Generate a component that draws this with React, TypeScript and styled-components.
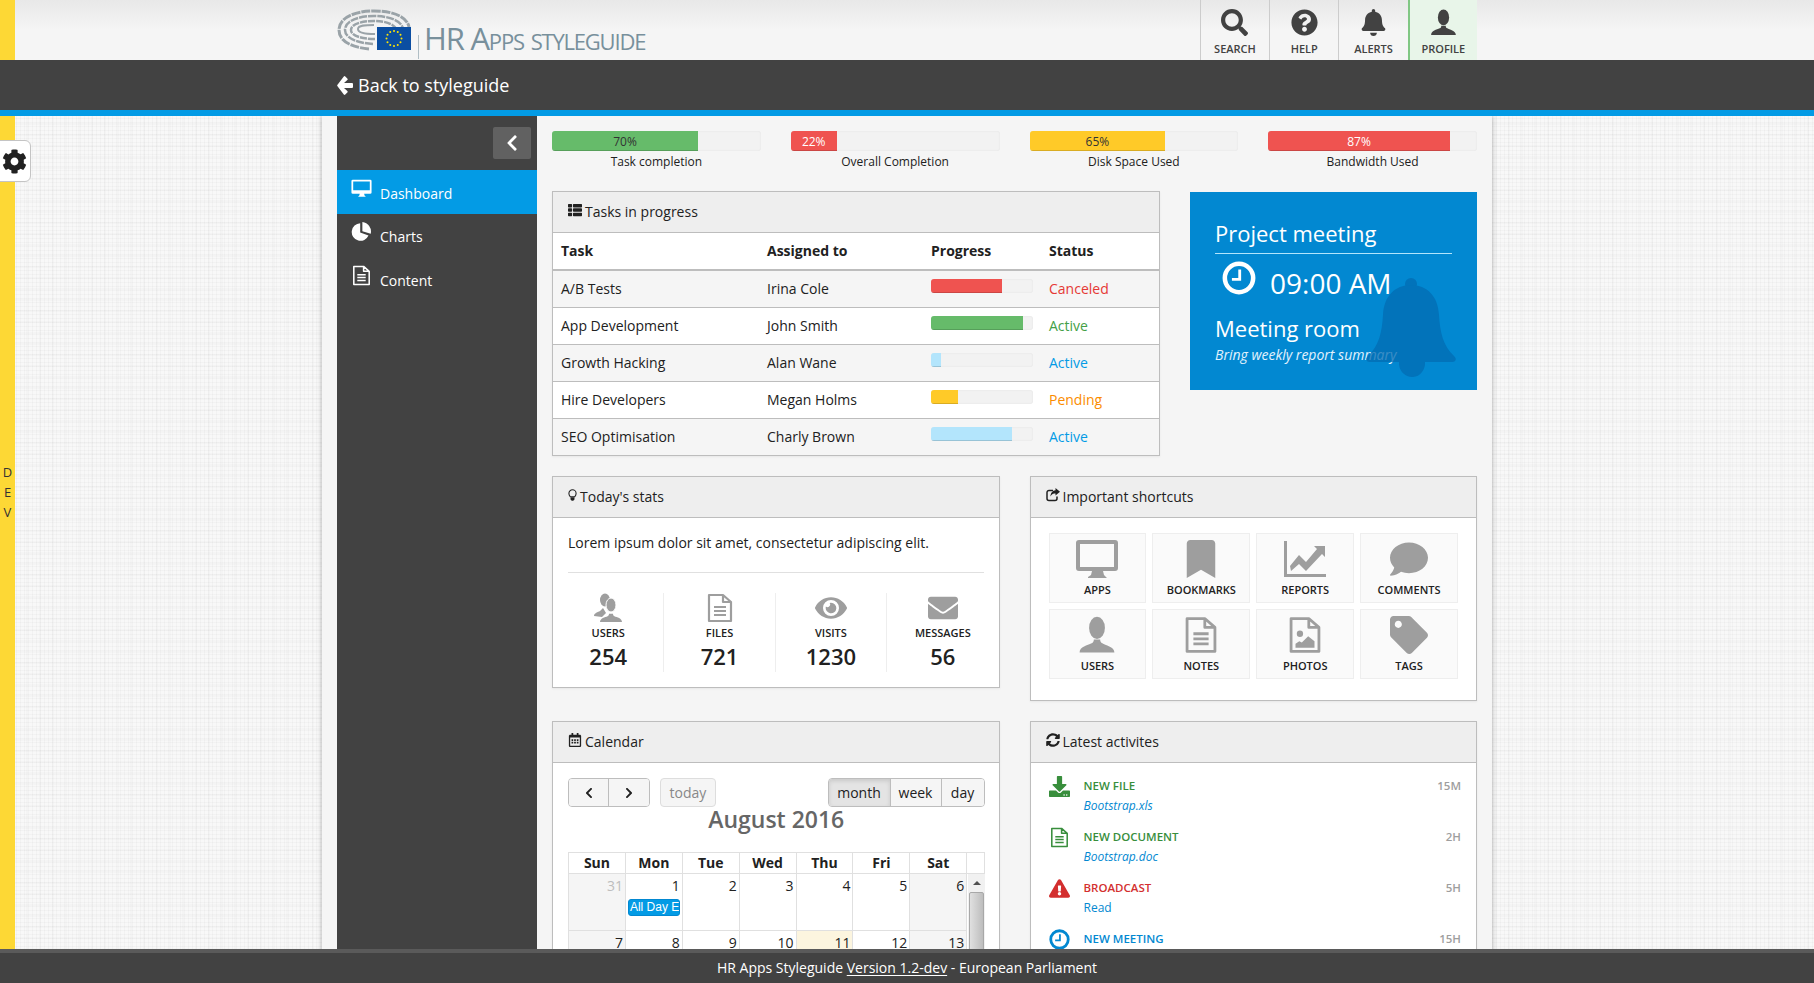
import * as React from 'react'
import styled, { createGlobalStyle } from 'styled-components'
import {
  FaBell, FaBookmark, FaChevronLeft, FaChevronRight, FaCog, FaComment, FaDownload, FaEnvelope,
  FaExclamationTriangle, FaEye, FaQuestionCircle, FaRegCalendarAlt, FaSearch, FaSyncAlt, FaTag, FaThList,
} from 'react-icons/fa'

const Global = createGlobalStyle`
  html, body { margin: 0; padding: 0; height: 100%; overflow: hidden; }
  body { font-family: "Open Sans", "Liberation Sans", sans-serif; font-size: 14px; color: #212121; }
  * { box-sizing: border-box; }
`

const Page = styled.div`
  position: relative;
  height: 983px;
  overflow: hidden;
  display: flex;
  flex-direction: column;
  background-color: #f8f8f8;
  background-image:
    repeating-linear-gradient(0deg, rgba(0, 0, 0, 0.022) 0 1px, transparent 1px 4px),
    repeating-linear-gradient(90deg, rgba(0, 0, 0, 0.022) 0 1px, transparent 1px 4px),
    repeating-linear-gradient(0deg, rgba(0, 0, 0, 0.014) 0 2px, transparent 2px 11px),
    repeating-linear-gradient(90deg, rgba(0, 0, 0, 0.014) 0 2px, transparent 2px 13px);
`

const DevStrip = styled.div`
  position: absolute;
  left: 0;
  top: 0;
  bottom: 0;
  width: 15px;
  background: #fdd835;
  z-index: 1;
  display: flex;
  flex-direction: column;
  align-items: center;
  padding-top: 462px;
  font-size: 13px;
  line-height: 20px;
  color: #333;
`

const SettingsTab = styled.div`
  position: absolute;
  left: -6px;
  top: 140px;
  width: 37px;
  height: 42px;
  background: #fff;
  border: 1px solid #c4c4c4;
  border-radius: 6px;
  z-index: 3;
  display: flex;
  align-items: center;
  justify-content: flex-end;
  padding-right: 3px;
  font-size: 25px;
  color: #212121;
`

const TopBar = styled.header`
  height: 60px;
  flex: none;
  margin-left: 15px;
  background: linear-gradient(#e8e8e8, #f5f5f5 50%);
  display: flex;
  justify-content: center;
  padding-right: 15px;
`

const TopInner = styled.div`
  width: 1140px;
  display: flex;
  align-items: stretch;
`

const Brand = styled.div`
  display: flex;
  align-items: flex-start;
  padding-top: 9px;
`

const BrandRule = styled.div`
  width: 1px;
  height: 24px;
  background: #b0bec5;
  margin: 26px 6px 0 7px;
`

const BrandName = styled.div`
  font-size: 31px;
  line-height: 38px;
  margin-top: 10px;
  margin-left: -1px;
  color: #78909c;
  font-variant: small-caps;
  letter-spacing: -1.2px;
  white-space: nowrap;
`

const TopNav = styled.nav`
  margin-left: auto;
  display: flex;
`

const TopItem = styled.a<{ $active?: boolean }>`
  width: 69.3px;
  display: flex;
  flex-direction: column;
  align-items: center;
  padding-top: 9px;
  border-left: ${p => (p.$active ? '2px solid #81c784' : '1px solid #ccc')};
  background: ${p => (p.$active ? '#e8f5e9' : 'transparent')};
  color: #424242;
  font-size: 11px;
  font-weight: 600;
  line-height: 15px;
  text-transform: uppercase;
  svg { width: 27px; height: 27px; margin-bottom: 5px; }
`

const BackBar = styled.div`
  position: relative;
  z-index: 2;
  height: 56px;
  flex: none;
  background: #424242;
  border-bottom: 6px solid #039be5;
  display: flex;
  justify-content: center;
`

const BackInner = styled.div`
  width: 1140px;
  display: flex;
  align-items: center;
  gap: 5px;
  color: #fff;
  font-size: 18px;
  svg { width: 16px; height: 19px; }
`

const Shell = styled.div`
  width: 1170px;
  margin: 0 auto;
  padding-left: 15px;
  flex: 1;
  min-height: 0;
  display: flex;
  background: #f5f5f5;
  box-shadow: 0 0 5px rgba(0, 0, 0, 0.3);
`

const Sidebar = styled.aside`
  width: 200px;
  flex: none;
  background: #424242;
  padding-top: 11px;
`

const Collapse = styled.div`
  width: 38px;
  height: 32px;
  margin: 0 6px 11px auto;
  background: #616161;
  border-radius: 2px;
  color: #fff;
  display: flex;
  align-items: center;
  justify-content: center;
  font-size: 18px;
`

const NavItem = styled.a<{ $active?: boolean }>`
  height: 43.5px;
  display: flex;
  align-items: center;
  gap: 8px;
  padding: 0 0 0 14px;
  color: #fff;
  font-size: 14px;
  background: ${p => (p.$active ? '#039be5' : 'transparent')};
  svg { width: 21px; height: 21px; margin-top: -6px; }
  span { margin-top: 3px; }
`

const Content = styled.main`
  flex: 1;
  min-width: 0;
  padding: 15px 15px 0;
`

const Meters = styled.div`
  display: grid;
  grid-template-columns: repeat(4, 1fr);
  gap: 30px;
  margin-bottom: 15px;
`

const Meter = styled.div`
  font-size: 12px;
  line-height: 22px;
  text-align: center;
  height: 45px;
`

const Track = styled.div<{ $h: number; $raised?: boolean }>`
  height: ${p => p.$h}px;
  background: #f2f2f2;
  border-radius: 3px;
  box-shadow: inset 0 0 2px rgba(0, 0, 0, 0.08);
  overflow: hidden;
  margin-top: ${p => (p.$raised ? '-5px' : '0')};
`

const Fill = styled.div<{ $color: string; $light?: boolean }>`
  height: 100%;
  background: ${p => p.$color};
  border-bottom: 1px solid rgba(0, 0, 0, 0.15);
  color: ${p => (p.$light ? '#fff' : '#333')};
  font-size: 12px;
  line-height: 21px;
`

const Row = styled.div<{ $cols: string }>`
  display: grid;
  grid-template-columns: ${p => p.$cols};
  column-gap: 30px;
  align-items: start;
  margin-bottom: 20px;
`

const Panel = styled.section`
  background: #fff;
  border: 1px solid #bdbdbd;
  box-shadow: 0 1px 2px rgba(0, 0, 0, 0.06);
`

const PanelHead = styled.h3`
  margin: 0;
  height: 41px;
  padding: 0 15px 2px;
  display: flex;
  align-items: center;
  gap: 3px;
  background: #eee;
  border-bottom: 1px solid #bdbdbd;
  font-size: 14px;
  font-weight: 400;
  color: #212121;
  svg { width: 14px; height: 14px; margin-top: -3px; }
`

const Table = styled.table`
  width: 100%;
  border-collapse: collapse;
  table-layout: fixed;
  font-size: 14px;
  th { height: 37px; padding: 0 8px 2px; text-align: left; font-weight: 700; border-bottom: 2px solid #bdbdbd; }
  td { height: 37px; padding: 0 8px; border-top: 1px solid #bdbdbd; }
  tbody tr:nth-child(odd) { background: #f5f5f5; }
  tbody tr:first-child td { border-top: 0; }
`

const TaskCol = styled.col`
  width: 206px;
`

const WhoCol = styled.col`
  width: 164px;
`

const ProgressCol = styled.col`
  width: 118px;
`

const StatusText = styled.span<{ $color: string }>`
  color: ${p => p.$color};
`

const Meeting = styled.div`
  position: relative;
  overflow: hidden;
  margin-top: 1px;
  height: 198px;
  background: #0288d1;
  color: #fff;
  padding: 25px 25px 0;
`

const MeetingBell = styled.div`
  position: absolute;
  left: 176px;
  top: 85px;
  color: #026cb3;
  opacity: 0.75;
  svg { display: block; width: 91px; height: 101px; }
`

const MeetingTitle = styled.div`
  font-size: 22px;
  line-height: 32px;
  padding-bottom: 4px;
  border-bottom: 1px solid #b3e5fc;
`

const MeetingTime = styled.div`
  display: flex;
  align-items: flex-start;
  gap: 14px;
  padding: 7px 0 0 7px;
  font-size: 28px;
  line-height: 44px;
  height: 56px;
  svg { width: 34px; height: 34px; }
`

const MeetingRoom = styled.div`
  font-size: 22px;
  line-height: 30px;
  margin-top: 3px;
`

const MeetingNote = styled.div`
  font-size: 14px;
  font-style: italic;
  line-height: 20px;
  margin-top: 2px;
  color: #e3f2fd;
`

const PanelBody = styled.div`
  padding: 15px;
`

const Lead = styled.p`
  margin: 0;
  line-height: 20px;
`

const Rule = styled.hr`
  border: 0;
  border-top: 1px solid #e0e0e0;
  margin: 19px 0 20px;
`

const Stats = styled.div`
  display: grid;
  grid-template-columns: repeat(4, 1fr);
  margin: 0 -15px 0;
`

const Stat = styled.div`
  height: 79px;
  display: flex;
  flex-direction: column;
  align-items: center;
  border-right: 1px solid #eee;
  &:last-child { border-right: 0; }
  svg { width: 32px; height: 30px; color: #9e9e9e; display: block; }
`

const StatLabel = styled.div`
  font-size: 11px;
  font-weight: 600;
  line-height: 16px;
  margin-top: 2px;
`

const StatValue = styled.div`
  font-size: 22px;
  font-weight: 600;
  line-height: 30px;
`

const Tiles = styled.div`
  display: grid;
  grid-template-columns: repeat(4, 1fr);
  gap: 6px;
  padding: 15px 18px 21px;
`

const Tile = styled.a`
  height: 70px;
  border: 1px solid #eee;
  background: #fafafa;
  display: flex;
  flex-direction: column;
  align-items: center;
  padding-top: 6px;
  font-size: 11px;
  font-weight: 600;
  line-height: 16px;
  svg { width: 44px; height: 38px; color: #9e9e9e; margin-bottom: 4px; display: block; }
`

const CalBody = styled.div`
  padding: 15px 14px 0 15px;
`

const CalBar = styled.div`
  display: flex;
  height: 29px;
`

const BtnGroup = styled.div`
  display: flex;
  border: 1px solid #bdbdbd;
  border-radius: 4px;
  overflow: hidden;
`

const CalBtn = styled.button<{ $active?: boolean; $w: number }>`
  width: ${p => p.$w}px;
  height: 100%;
  padding: 0;
  border: 0;
  border-right: 1px solid #bdbdbd;
  background: ${p => (p.$active ? '#e4e4e4' : '#f5f5f5')};
  box-shadow: ${p => (p.$active ? 'inset 0 2px 4px rgba(0,0,0,.12)' : 'none')};
  color: #212121;
  font: 14px "Open Sans", sans-serif;
  display: flex;
  align-items: center;
  justify-content: center;
  &:last-child { border-right: 0; }
  svg { width: 12px; height: 12px; }
`

const TodayBtn = styled.button`
  width: 56px;
  margin-left: 10px;
  padding: 0;
  border: 1px solid #ddd;
  border-radius: 4px;
  background: #f5f5f5;
  color: #888;
  font: 14px "Open Sans", sans-serif;
`

const ViewGroup = styled(BtnGroup)`
  margin-left: auto;
`

const CalTitle = styled.div`
  height: 45px;
  text-align: center;
  font-size: 23px;
  font-weight: 600;
  line-height: 25px;
  color: #666;
`

const CalHead = styled.div`
  display: grid;
  grid-template-columns: repeat(7, 56.9px) 1fr;
  height: 22px;
  border: 1px solid #e0e0e0;
  width: 417px;
  font-weight: 700;
  line-height: 20px;
  text-align: center;
  div { border-right: 1px solid #e0e0e0; }
  div:last-child { border-right: 0; }
`

const CalGrid = styled.div`
  position: relative;
  width: 417px;
  height: 120px;
  border-left: 1px solid #e0e0e0;
`

const Week = styled.div`
  display: grid;
  grid-template-columns: repeat(7, 56.9px);
  height: 57px;
`

const Day = styled.div<{ $weekend?: boolean; $today?: boolean; $muted?: boolean }>`
  min-width: 0;
  background: ${p => (p.$today ? '#fcf5df' : p.$weekend ? '#f5f5f5' : '#fff')};
  border-right: 1px solid #e0e0e0;
  border-bottom: 1px solid #e0e0e0;
  padding: 2px 2px 0 0;
  text-align: right;
  line-height: 20px;
  color: ${p => (p.$muted ? '#bdbdbd' : '#212121')};
`

const Event = styled.div`
  margin: 3px 0 0 2px;
  height: 17px;
  background: #039be5;
  border: 1px solid #0288d1;
  border-radius: 3px;
  color: #fff;
  font: 12px/15px "Liberation Sans", sans-serif;
  text-align: left;
  padding-left: 1px;
  overflow: hidden;
  white-space: nowrap;
`

const Scrollbar = styled.div`
  position: absolute;
  top: 0;
  right: 0;
  bottom: 0;
  width: 17px;
  background: #f1f1f1;
  padding-top: 18px;
  &::before {
    content: '';
    position: absolute;
    top: 7px;
    left: 5px;
    border: 4px solid transparent;
    border-top: 0;
    border-bottom: 4px solid #505050;
  }
`

const ScrollThumb = styled.div`
  margin-left: 1px;
  width: 15px;
  height: 200px;
  background: linear-gradient(90deg, #e0e0e0, #bdbdbd);
  border: 1px solid #a8a8a8;
  border-radius: 2px;
`

const Activities = styled.div`
  padding: 13px 15px 0 18px;
`

const Activity = styled.div`
  display: grid;
  grid-template-columns: 35px 1fr auto;
  height: 51px;
  font-size: 12px;
  line-height: 19px;
`

const ActivityIcon = styled.div<{ $color: string }>`
  color: ${p => p.$color};
  svg { display: block; width: 21px; height: 21px; }
`

const ActivityTitle = styled.div<{ $color: string }>`
  color: ${p => p.$color};
  font-weight: 600;
  font-size: 11.5px;
  margin-bottom: 1px;
`

const ActivityLink = styled.a<{ $plain?: boolean }>`
  color: #0288d1;
  font-style: ${p => (p.$plain ? 'normal' : 'italic')};
  font-size: 12px;
`

const ActivityTime = styled.div`
  color: #9e9e9e;
  font-weight: 600;
  font-size: 11.5px;
`

const Footer = styled.footer`
  position: absolute;
  left: 0;
  right: 0;
  bottom: 0;
  z-index: 4;
  height: 34px;
  background: #424242;
  border-top: 4px solid #5a5a5a;
  color: #fff;
  font-size: 14px;
  line-height: 30px;
  text-align: center;
  u { text-underline-offset: 2px; }
`

const Stroke = { fill: 'none', stroke: 'currentColor', strokeLinejoin: 'round' as const }

const ArrowLeft = () => (
  <svg viewBox="0 0 16 19" fill="currentColor">
    <path d="M8.300 0.500 10.300 2.500a1 1 0 0 1 0 1.500L7 7H15a1 1 0 0 1 1 1v3a1 1 0 0 1-1 1H7l3.300 3a1 1 0 0 1 0 1.500l-2 2a1 1 0 0 1-1.500 0L.5 10.200a1 1 0 0 1 0-1.400L6.800.5a1 1 0 0 1 1.500 0z" />
  </svg>
)

const UserIcon = () => (
  <svg viewBox="0 0 24 24" fill="currentColor">
    <ellipse cx="12" cy="7.500" rx="5" ry="7" />
    <path d="M1 23c0-3.600 5-4.600 7.600-5.800 1-.5 1.400-1.200 1.400-2.400h4c0 1.200.4 1.900 1.400 2.400C17 18.400 23 19.400 23 23z" />
  </svg>
)

const UsersIcon = () => (
  <svg viewBox="0 0 30 30" fill="currentColor">
    <ellipse cx="12" cy="7" rx="5" ry="6.500" />
    <path d="M1 23c0-3 4-3.800 6-5l3-3 3 5-4 4z" />
    <ellipse cx="18" cy="12" rx="5" ry="7" stroke="#fff" strokeWidth="1" />
    <path d="M7 29c0-4 5-4.600 7.600-5.800 1-.5 1.400-1.200 1.400-2.400h4c0 1.200.4 1.900 1.400 2.400 2.600 1.200 7.600 1.800 7.600 5.800z" />
  </svg>
)

const DesktopIcon = () => (
  <svg viewBox="0 0 42 38" fill="currentColor">
    <path fillRule="evenodd" d="M3 0h36a3 3 0 0 1 3 3v25a3 3 0 0 1-3 3H27l1 4 3 3H12v-1l3-2 1-4H3a3 3 0 0 1-3-3V3a3 3 0 0 1 3-3zm1 4v23h34V4z" />
  </svg>
)

const DesktopSolidIcon = () => (
  <svg viewBox="0 0 24 22" fill="currentColor">
    <path fillRule="evenodd" d="M2 1h20a1.500 1.500 0 0 1 1.500 1.500v13a1.500 1.500 0 0 1-1.500 1.500h-7l.5 2 1.500 1.500H8L9.500 19l.5-2H2a1.500 1.500 0 0 1-1.500-1.500v-13A1.500 1.500 0 0 1 2 1zm.5 2v10h19V3z" />
  </svg>
)

const PieIcon = () => (
  <svg viewBox="0 0 24 24" fill="currentColor">
    <path d="M10.500 1.500a10 10 0 1 0 9.500 14L10.500 12z" />
    <path d="M13 0v10.500l9.500 3A11 11 0 0 0 13 0z" />
  </svg>
)

const FileIcon = () => (
  <svg viewBox="0 0 26 30" {...Stroke} strokeWidth="2.200">
    <path d="M2 2h14l8 7v19H2zM16 2v7h8" />
    <path d="M7 14h12M7 18h12M7 22h12" />
  </svg>
)

const PhotoIcon = () => (
  <svg viewBox="0 0 26 30">
    <path {...Stroke} strokeWidth="2.200" d="M2 2h14l8 7v19H2zM16 2v7h8" />
    <circle cx="9" cy="14" r="2.500" fill="currentColor" />
    <path fill="currentColor" d="M5.500 25v-3l3-2 2 1 5-5 5 4v5z" />
  </svg>
)

const ChartIcon = () => (
  <svg viewBox="0 0 42 38" fill="currentColor">
    <path d="M0 1h3v33h39v3H0z" />
    <path d="M6 26l9-11 7 7L33 9l-3-3h11v11l-3-3-16 17-7-7-8 7z" />
  </svg>
)

const ClockIcon = () => (
  <svg viewBox="0 0 24 24" {...Stroke} strokeWidth="3.200">
    <circle cx="12" cy="12" r="10" />
    <path strokeWidth="2" strokeLinejoin="miter" d="M12.500 6v7H7" />
  </svg>
)

const NarrowSvg = styled.svg`
  && { width: 9px; }
`

const BulbIcon = () => (
  <NarrowSvg viewBox="2 0 10 14">
    <path {...Stroke} strokeWidth="1.200" d="M4.500 9C3.500 7.500 3 6.700 3 5.200a4 4 0 0 1 8 0C11 6.700 10.500 7.500 9.500 9z" />
    <path fill="currentColor" d="M4.800 9.500h4.400V12L7.800 13.500H6.200L4.800 12z" />
  </NarrowSvg>
)

const ShareIcon = () => (
  <svg viewBox="0 0 14 14">
    <path {...Stroke} strokeWidth="1.500" d="M7 2.500H3a2 2 0 0 0-2 2v6a2 2 0 0 0 2 2h6a2 2 0 0 0 2-2v-2" />
    <path fill="currentColor" d="M9.500 0L14 3.800 9.500 7.500V5.500C7.500 5.500 5.500 6 4.500 8.500 4.500 5 6.500 2.500 9.500 2.200z" />
  </svg>
)

const BellShape = () => (
  <svg viewBox="0 0 91 101" fill="currentColor">
    <circle cx="45" cy="7" r="6" />
    <path d="M45 8c16 0 27 11 28 30 1 17 4 31 15 41 3 3 2 6-2 6H4c-4 0-5-3-2-6 11-10 14-24 15-41C18 19 29 8 45 8z" />
    <path d="M33 85h26a13 14 0 0 1-26 2z" />
  </svg>
)

const Logo = () => (
  <svg width="74" height="42" viewBox="0 0 74 42">
    <g fill="none" stroke="#9aa3a8">
      <path strokeWidth="3" d="M32 40C12 38 2 31 2 21 2 9 17 2 37 2s33 6 35 16" strokeDasharray="9 1" />
      <path strokeWidth="2.500" d="M36 35C20 34 8 29 8 21 8 12 21 7 37 7s28 5 29 13" strokeDasharray="8 1" />
      <path strokeWidth="2.500" d="M38 30c-13 0-24-3-24-9 0-6 11-9 23-9s21 3 23 10" strokeDasharray="7 1" />
      <path strokeWidth="2" d="M38 25c-8 0-17-1-17-5s8-4 16-4" />
    </g>
    <rect x="40" y="18" width="34" height="23" fill="#0b4ea2" />
    {Array.from({ length: 12 }, (_, i) => {
      const a = (i * Math.PI) / 6
      return <circle key={i} cx={57 + Math.cos(a) * 7.500} cy={29.500 + Math.sin(a) * 7.500} r="1" fill="#ffe600" />
    })}
  </svg>
)

const meters = [
  { label: 'Task completion', pct: 70, color: '#66bb6a', text: '70%' },
  { label: 'Overall Completion', pct: 22, color: '#ef5350', text: '22%', light: true },
  { label: 'Disk Space Used', pct: 65, color: '#ffca28', text: '65%' },
  { label: 'Bandwidth Used', pct: 87, color: '#ef5350', text: '87%', light: true },
]

const tasks = [
  { task: 'A/B Tests', who: 'Irina Cole', pct: 70, bar: '#ef5350', status: 'Canceled', color: '#e53935' },
  { task: 'App Development', who: 'John Smith', pct: 90, bar: '#66bb6a', status: 'Active', color: '#43a047' },
  { task: 'Growth Hacking', who: 'Alan Wane', pct: 10, bar: '#b3e5fc', status: 'Active', color: '#039be5' },
  { task: 'Hire Developers', who: 'Megan Holms', pct: 26, bar: '#ffca28', status: 'Pending', color: '#fb8c00' },
  { task: 'SEO Optimisation', who: 'Charly Brown', pct: 79, bar: '#b3e5fc', status: 'Active', color: '#039be5' },
]

const stats = [
  { label: 'Users', value: 254, icon: <UsersIcon /> },
  { label: 'Files', value: 721, icon: <FileIcon /> },
  { label: 'Visits', value: 1230, icon: <FaEye /> },
  { label: 'Messages', value: 56, icon: <FaEnvelope /> },
]

const shortcuts = [
  { label: 'Apps', icon: <DesktopIcon /> },
  { label: 'Bookmarks', icon: <FaBookmark /> },
  { label: 'Reports', icon: <ChartIcon /> },
  { label: 'Comments', icon: <FaComment /> },
  { label: 'Users', icon: <UserIcon /> },
  { label: 'Notes', icon: <FileIcon /> },
  { label: 'Photos', icon: <PhotoIcon /> },
  { label: 'Tags', icon: <FaTag /> },
]

const activities = [
  { title: 'NEW FILE', sub: 'Bootstrap.xls', time: '15M', color: '#388e3c', icon: <FaDownload /> },
  { title: 'NEW DOCUMENT', sub: 'Bootstrap.doc', time: '2H', color: '#388e3c', icon: <FileIcon /> },
  { title: 'BROADCAST', sub: 'Read', plain: true, time: '5H', color: '#d32f2f', icon: <FaExclamationTriangle /> },
  { title: 'NEW MEETING', time: '15H', color: '#0288d1', icon: <ClockIcon /> },
]

const weeks = [
  [31, 1, 2, 3, 4, 5, 6],
  [7, 8, 9, 10, 11, 12, 13],
]

export default function App() {
  return (
    <Page>
      <Global />
      <DevStrip>
        <span>D</span>
        <span>E</span>
        <span>V</span>
      </DevStrip>
      <SettingsTab>
        <FaCog />
      </SettingsTab>

      <TopBar>
        <TopInner>
          <Brand>
            <Logo />
            <BrandRule />
            <BrandName>HR Apps styleguide</BrandName>
          </Brand>
          <TopNav>
            <TopItem><FaSearch />Search</TopItem>
            <TopItem><FaQuestionCircle />Help</TopItem>
            <TopItem><FaBell />Alerts</TopItem>
            <TopItem $active><UserIcon />Profile</TopItem>
          </TopNav>
        </TopInner>
      </TopBar>

      <BackBar>
        <BackInner>
          <ArrowLeft />
          Back to styleguide
        </BackInner>
      </BackBar>

      <Shell>
        <Sidebar>
          <Collapse><FaChevronLeft /></Collapse>
          <NavItem $active><DesktopSolidIcon /><span>Dashboard</span></NavItem>
          <NavItem><PieIcon /><span>Charts</span></NavItem>
          <NavItem><FileIcon /><span>Content</span></NavItem>
        </Sidebar>

        <Content>
          <Meters>
            {meters.map(m => (
              <Meter key={m.label}>
                <Track $h={20}>
                  <Fill $color={m.color} $light={m.light} style={{ width: `${m.pct}%` }}>{m.text}</Fill>
                </Track>
                {m.label}
              </Meter>
            ))}
          </Meters>

          <Row $cols="608px minmax(0, 1fr)">
            <Panel>
              <PanelHead><FaThList /> Tasks in progress</PanelHead>
              <Table>
                <colgroup>
                  <TaskCol />
                  <WhoCol />
                  <ProgressCol />
                  <col />
                </colgroup>
                <thead>
                  <tr>
                    <th>Task</th>
                    <th>Assigned to</th>
                    <th>Progress</th>
                    <th>Status</th>
                  </tr>
                </thead>
                <tbody>
                  {tasks.map(t => (
                    <tr key={t.task}>
                      <td>{t.task}</td>
                      <td>{t.who}</td>
                      <td>
                        <Track $h={14} $raised>
                          <Fill $color={t.bar} style={{ width: `${t.pct}%` }} />
                        </Track>
                      </td>
                      <td><StatusText $color={t.color}>{t.status}</StatusText></td>
                    </tr>
                  ))}
                </tbody>
              </Table>
            </Panel>

            <Meeting>
              <MeetingTitle>Project meeting</MeetingTitle>
              <MeetingTime><ClockIcon /><span>09:00 AM</span></MeetingTime>
              <MeetingRoom>Meeting room</MeetingRoom>
              <MeetingNote>Bring weekly report summary</MeetingNote>
              <MeetingBell><BellShape /></MeetingBell>
            </Meeting>
          </Row>

          <Row $cols="repeat(2, minmax(0, 1fr))">
            <Panel>
              <PanelHead><BulbIcon /> Today&apos;s stats</PanelHead>
              <PanelBody>
                <Lead>Lorem ipsum dolor sit amet, consectetur adipiscing elit.</Lead>
                <Rule />
                <Stats>
                  {stats.map(s => (
                    <Stat key={s.label}>
                      {s.icon}
                      <StatLabel>{s.label.toUpperCase()}</StatLabel>
                      <StatValue>{s.value}</StatValue>
                    </Stat>
                  ))}
                </Stats>
              </PanelBody>
            </Panel>

            <Panel>
              <PanelHead><ShareIcon /> Important shortcuts</PanelHead>
              <Tiles>
                {shortcuts.map(s => (
                  <Tile key={s.label}>
                    {s.icon}
                    {s.label.toUpperCase()}
                  </Tile>
                ))}
              </Tiles>
            </Panel>
          </Row>

          <Row $cols="repeat(2, minmax(0, 1fr))">
            <Panel>
              <PanelHead><FaRegCalendarAlt /> Calendar</PanelHead>
              <CalBody>
                <CalBar>
                  <BtnGroup>
                    <CalBtn $w={40}><FaChevronLeft /></CalBtn>
                    <CalBtn $w={40}><FaChevronRight /></CalBtn>
                  </BtnGroup>
                  <TodayBtn>today</TodayBtn>
                  <ViewGroup>
                    <CalBtn $w={62} $active>month</CalBtn>
                    <CalBtn $w={51}>week</CalBtn>
                    <CalBtn $w={42}>day</CalBtn>
                  </ViewGroup>
                </CalBar>
                <CalTitle>August 2016</CalTitle>
                <CalHead>
                  {['Sun', 'Mon', 'Tue', 'Wed', 'Thu', 'Fri', 'Sat'].map(d => <div key={d}>{d}</div>)}
                  <div />
                </CalHead>
                <CalGrid>
                  {weeks.map((week, w) => (
                    <Week key={w}>
                      {week.map((d, i) => (
                        <Day key={d} $weekend={i === 0 || i === 6} $today={d === 11} $muted={d === 31}>
                          {d}
                          {d === 1 && <Event>All Day Event</Event>}
                        </Day>
                      ))}
                    </Week>
                  ))}
                  <Scrollbar><ScrollThumb /></Scrollbar>
                </CalGrid>
              </CalBody>
            </Panel>

            <Panel>
              <PanelHead><FaSyncAlt /> Latest activites</PanelHead>
              <Activities>
                {activities.map(a => (
                  <Activity key={a.title}>
                    <ActivityIcon $color={a.color}>{a.icon}</ActivityIcon>
                    <div>
                      <ActivityTitle $color={a.color}>{a.title}</ActivityTitle>
                      {a.sub && <ActivityLink $plain={a.plain}>{a.sub}</ActivityLink>}
                    </div>
                    <ActivityTime>{a.time}</ActivityTime>
                  </Activity>
                ))}
              </Activities>
            </Panel>
          </Row>
        </Content>
      </Shell>

      <Footer>
        HR Apps Styleguide <u>Version 1.2-dev</u> - European Parliament
      </Footer>
    </Page>
  )
}
